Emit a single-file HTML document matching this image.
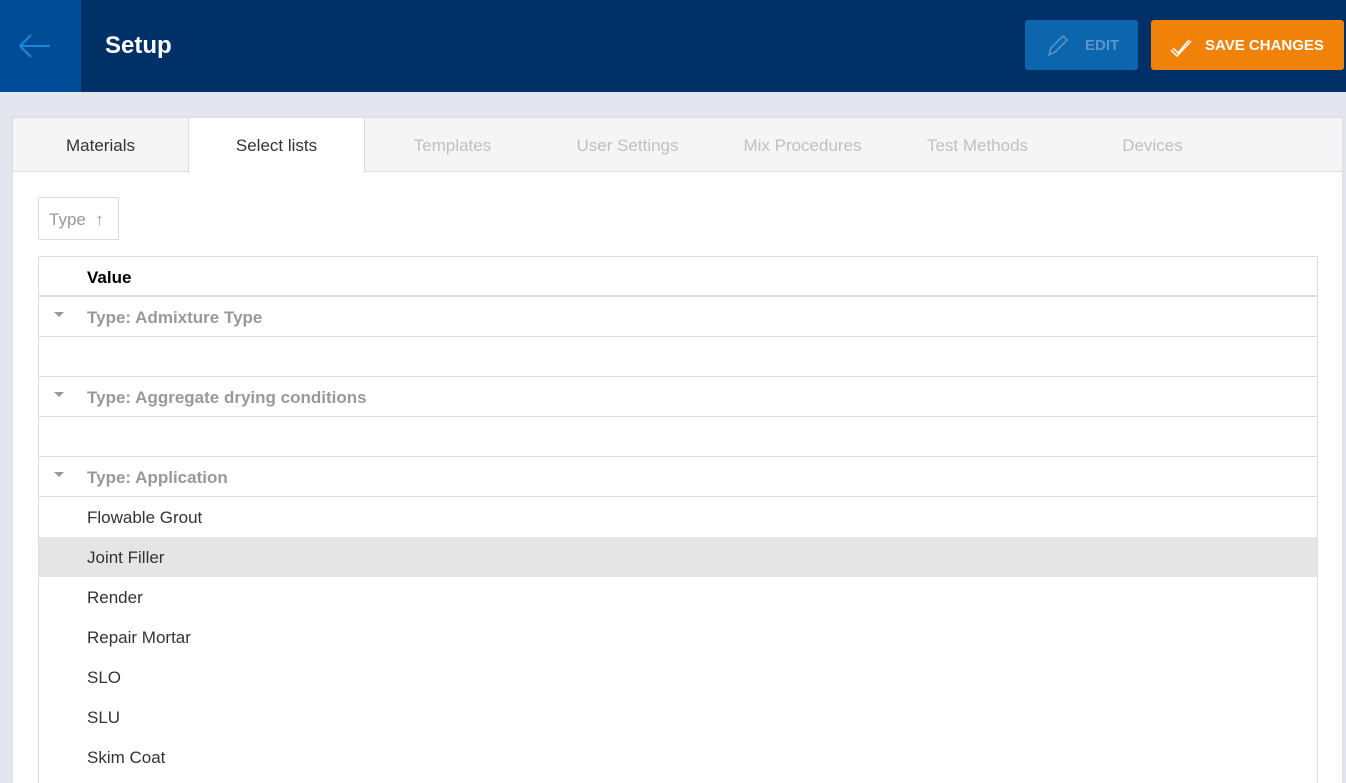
<!DOCTYPE html>
<html><head><meta charset="utf-8"><style>
*{box-sizing:border-box;margin:0;padding:0}
html,body{width:1346px;height:783px;overflow:hidden}
body{background:#e3e6ee;font-family:"Liberation Sans",sans-serif;position:relative}
.hdr{position:absolute;left:0;top:0;width:1346px;height:92px;background:#003068}
.back{position:absolute;left:0;top:0;width:81px;height:92px;background:#004c97}
.title{position:absolute;left:105px;top:32px;color:#fff;font-weight:bold;font-size:24px}
.btn{position:absolute;top:20px;height:50px;border-radius:3px;font-weight:bold;font-size:15px;display:flex;align-items:center}
.edit{left:1025px;width:113px;background:#0b66ad;color:#5e95c8}
.save{left:1151px;width:193px;background:#f0820a;color:#fff}
.card{position:absolute;left:12px;top:117px;width:1331px;height:666px;background:#fff;border:1px solid #dcdcdc;border-bottom:none;overflow:hidden}
.tabs{position:absolute;left:0;top:0;width:1329px;height:54px;background:#f5f5f5;border-bottom:1px solid #dcdcdc}
.tab{position:absolute;top:0;height:54px;width:175px;text-align:center;line-height:56px;font-size:17px;color:#c0c0c0}
.sort{position:absolute;left:25px;top:79px;width:81px;height:43px;border:1px solid #dcdcdc;color:#999;font-size:17px;line-height:43px;padding-left:10px}
.tbl{position:absolute;left:25px;top:138px;width:1280px;height:528px;border:1px solid #dcdcdc;border-bottom:none;overflow:hidden}
.row{height:40px;font-size:17px;line-height:42px;padding-left:48px;color:#333;position:relative}
.b{border-bottom:1px solid #dcdcdc}
.g{color:#999;font-weight:bold}
.g:before{content:"";position:absolute;left:15px;top:15px;border:5px solid transparent;border-top:5px solid #999}
.sel{background:#e5e5e5}
</style></head><body>
<div class="hdr"><div class="back"><svg width="81" height="92"><path d="M20 46H50M20 46L31 35M20 46L31 57" stroke="#1e88d8" stroke-width="2" fill="none"/></svg></div>
<div class="title">Setup</div>
<div class="btn edit"><svg width="60" height="50"><path d="M24 35L26 28L38 16L42 20L30 32Z" stroke="#5e95c8" stroke-width="1.5" fill="none"/></svg>EDIT</div>
<div class="btn save"><svg width="54" height="50"><path d="M22 28L27 33L38 20M20 30L26 36L40 21" stroke="#fff" stroke-width="1.5" fill="none"/></svg>SAVE CHANGES</div>
</div>
<div class="card">
<div class="tabs">
<div class="tab" style="left:0;color:#333">Materials</div>
<div class="tab" style="left:175px;width:177px;background:#fff;color:#333;height:55px;border-left:1px solid #dcdcdc;border-right:1px solid #dcdcdc">Select lists</div>
<div class="tab" style="left:352px">Templates</div>
<div class="tab" style="left:527px">User Settings</div>
<div class="tab" style="left:702px">Mix Procedures</div>
<div class="tab" style="left:877px">Test Methods</div>
<div class="tab" style="left:1052px">Devices</div>
</div>
<div class="sort">Type &nbsp;↑</div>
<div class="tbl">
<div class="row" style="font-weight:bold;color:#000;border-bottom:2px solid #dcdcdc">Value</div>
<div class="row g b">Type: Admixture Type</div>
<div class="row b"></div>
<div class="row g b">Type: Aggregate drying conditions</div>
<div class="row b"></div>
<div class="row g b">Type: Application</div>
<div class="row">Flowable Grout</div>
<div class="row sel">Joint Filler</div>
<div class="row">Render</div>
<div class="row">Repair Mortar</div>
<div class="row">SLO</div>
<div class="row">SLU</div>
<div class="row">Skim Coat</div>
</div>
</div>
</body></html>
